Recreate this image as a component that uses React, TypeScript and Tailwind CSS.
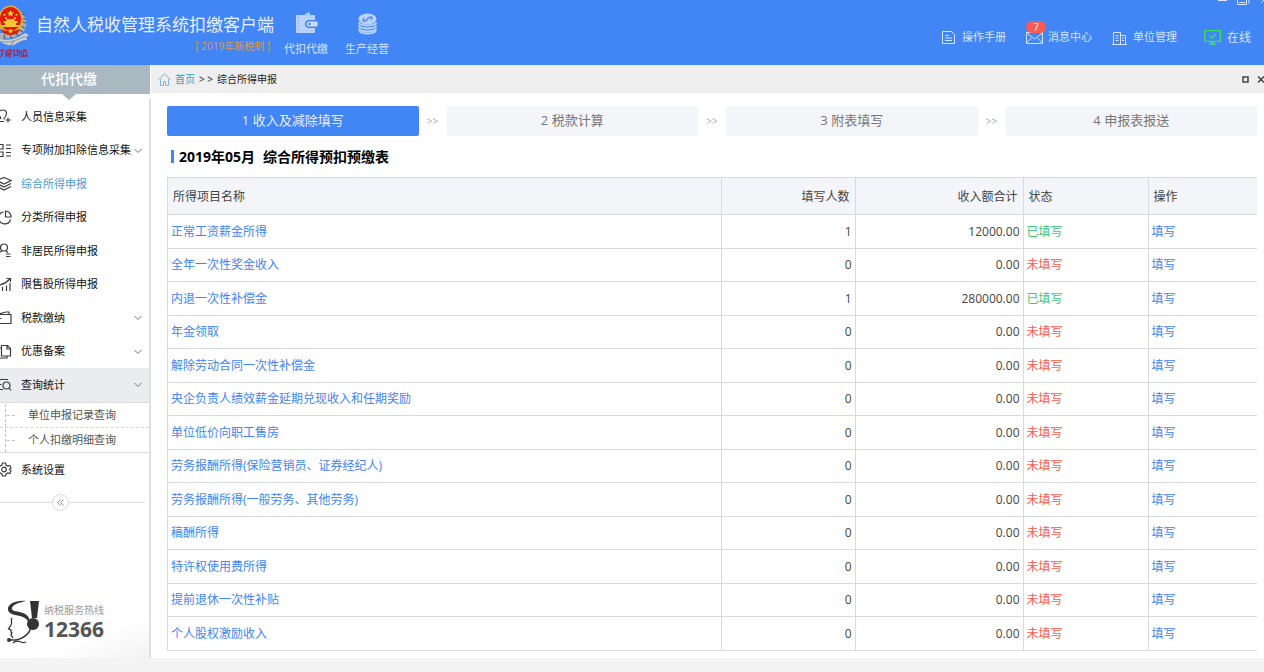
import { Fragment, type ReactNode } from 'react';

const FONT = "font-['Open_Sans','Noto_Sans_CJK_SC',sans-serif]";

type Item = { label: string; icon: ReactNode; arrow?: boolean; state?: 'active' | 'open' };

const topItems: Item[] = [
  {
    label: '人员信息采集',
    icon: (
      <>
        <path d="M8 9c1.500-1 2.500-3 2.500-5S9 1 6.500 1 3 2 3 4s1 4 2 5M5 9c0 1-4 1-4 3.500h7" />
        <path d="M8 9v1.500M12 8.500v5M9.500 11H15" />
      </>
    ),
  },
  {
    label: '专项附加扣除信息采集',
    arrow: true,
    icon: <path d="M1 1.500h6v4.500H1zM1 9h6v4.500H1zM10 2h5M10 5.500h5M10 9.500h5M10 13h5" />,
  },
  {
    label: '综合所得申报',
    state: 'active',
    icon: <path d="M8 1.500l7 3-7 3.500-7-3.500zM1 7.500l7 3.500 7-3.500M1 10.500L8 14l7-3.500" />,
  },
  {
    label: '分类所得申报',
    icon: (
      <>
        <path d="M7.500 2a6 6 0 1 0 7 7.500" />
        <path d="M9.500 1v6h5.500a5.500 5.500 0 0 0-5.500-6z" />
      </>
    ),
  },
  {
    label: '非居民所得申报',
    icon: (
      <>
        <circle cx="8" cy="4.500" r="3.500" />
        <path d="M6 8c-3 1-4 3-4 5.500M10 8l2 1.500M10 11h4.500M10 13.500h4.500" />
      </>
    ),
  },
  {
    label: '限售股所得申报',
    icon: <path d="M2.500 14v-3M6.500 14V10M10.500 14V8.500M14 14V6M1 8.500C6 8 10 6 14 2M10.500 1.500H14.500V5" />,
  },
  {
    label: '税款缴纳',
    arrow: true,
    icon: <path d="M1 4.500h14v9H1M1 4.500L10 2h3v2.500M1 8.500h4.500" />,
  },
  {
    label: '优惠备案',
    arrow: true,
    icon: <path d="M5.500 1.500h6l3 3v7.500h-9zM11 1.500v3.500h3.500M5.500 4H2.500v10H11v-2" />,
  },
  {
    label: '查询统计',
    arrow: true,
    state: 'open',
    icon: (
      <>
        <circle cx="10.500" cy="8.500" r="3.500" />
        <path d="M13 11l2 2.500M1 2.500h11M1 7.500h4.500M1 12.500h6" />
      </>
    ),
  },
];

const steps = ['1 收入及减除填写', '2 税款计算', '3 附表填写', '4 申报表报送'];

const rows = [
  { name: '正常工资薪金所得', count: 1, total: '12000.00' },
  { name: '全年一次性奖金收入', count: 0, total: '0.00' },
  { name: '内退一次性补偿金', count: 1, total: '280000.00' },
  { name: '年金领取', count: 0, total: '0.00' },
  { name: '解除劳动合同一次性补偿金', count: 0, total: '0.00' },
  { name: '央企负责人绩效薪金延期兑现收入和任期奖励', count: 0, total: '0.00' },
  { name: '单位低价向职工售房', count: 0, total: '0.00' },
  { name: '劳务报酬所得(保险营销员、证券经纪人)', count: 0, total: '0.00' },
  { name: '劳务报酬所得(一般劳务、其他劳务)', count: 0, total: '0.00' },
  { name: '稿酬所得', count: 0, total: '0.00' },
  { name: '特许权使用费所得', count: 0, total: '0.00' },
  { name: '提前退休一次性补贴', count: 0, total: '0.00' },
  { name: '个人股权激励收入', count: 0, total: '0.00' },
];

function Emblem() {
  return (
    <svg className="h-[60px] w-[29px] shrink-0" viewBox="0 0 29 60" fill="none">
      <path d="M18 11c6 3 9 8 8 15-1 6-6 10-15 12l-11 1v-6l8-1c8-2 13-11 10-21z" fill="#aab1b6" />
      <path d="M21 15l4-1M22 19l4 0M22 22l4 1M21 26l4 2M19 30l4 2M15 33l4 3M10 35l2 4M4 35l1 4" stroke="#4d5c73" strokeWidth="1.200" />
      <path d="M0 39c9 2 17 0 25-6l4 2-3 2 1 3c-5 0-9 2-13 5-4 1-10 0-14-4z" fill="#c9ced2" />
      <path d="M0 41.500c9 2 16-1 25-5" stroke="#8a949c" />
      <path d="M14 41l-3 4" stroke="#6f7a86" />
      <ellipse cx="10.500" cy="20" rx="12.500" ry="14.500" fill="#e3b034" />
      <ellipse cx="10.500" cy="19" rx="10.500" ry="12" fill="#e81710" />
      <path d="M10.500 10l1 2.500H14l-2 1.600.8 2.500-2.300-1.500-2.300 1.500.8-2.500-2-1.600h2.500z" fill="#ffe23c" />
      <path d="M3.500 14h2v1.500h-2zM15.500 14h2v1.500h-2zM5 17.500h2V19H5zM14 17.500h2V19h-2z" fill="#ffd83c" />
      <path d="M7 19h7l1 2h2l1 2h-2v2h3v2H2v-2h3v-2H3l1-2h2z" fill="#f6c733" />
      <path d="M1 29c6 3 13 3 19 0l-2 4c-5 2.500-10 2.500-15 0z" fill="#d3200f" />
      <circle cx="10.500" cy="31" r="2" fill="#f0bd2c" />
      <path
        d="M0 51l3-1-1 5-2 2M6 51l5-1-1 7-1-1M6 51v6M8 52v4M7 54h3M13 51l2-1M14 49v7l2-1M16 51l2-1-1 6M20 50l-1 6M21 51l1 5-2 1M23 51l4-1M24 49l-1 8M26 52l1 4-3 0"
        stroke="#a02a55"
        strokeWidth="1.300"
      />
    </svg>
  );
}

function Chevron() {
  return (
    <svg className="h-2 w-2 shrink-0" viewBox="0 0 8 8" fill="none" stroke="#777">
      <path d="M.5 2L4 5.500 7.500 2" />
    </svg>
  );
}

function NavRow({ label, icon, arrow, state }: Item) {
  return (
    <li className={`odd:h-[34px] even:h-[33px] ${state === 'open' ? 'bg-[#ebecef]' : ''}`}>
      <a
        href="#"
        className={`flex h-full items-center pr-[7px] text-[11px] ${state === 'active' ? 'text-[#4a9bd6]' : 'text-[#111]'}`}
      >
        <svg className="-ml-1 mr-[9px] h-4 w-4 shrink-0" viewBox="0 0 16 16" fill="none" stroke="#3c3c3c" strokeWidth="1.200">
          {icon}
        </svg>
        <span className="flex-1 whitespace-nowrap">{label}</span>
        {arrow && <Chevron />}
      </a>
    </li>
  );
}

function Header() {
  return (
    <header className="relative flex h-[65px] shrink-0 overflow-hidden bg-[#4285f5] text-[#d3e3fd]">
      <Emblem />
      <div className="ml-[7px] w-[238px] pt-[13px]">
        <h1 className="whitespace-nowrap text-[17px] leading-6 text-[#e6efff]">自然人税收管理系统扣缴客户端</h1>
        <p className="pr-1 text-right text-[10px] leading-[18px] text-[#d99a4b]">[ 2019年新税制 ]</p>
      </div>
      <nav className="ml-[10px] flex gap-[17px] pt-3 text-[11px] leading-4">
        <a href="#" className="flex flex-col items-center gap-[6px]">
          <svg className="h-[23px] w-[23px]" viewBox="0 0 23 23">
            <path d="M2 3h7l5-3 1 3h4a1 1 0 0 1 1 1v4h-6a4 4 0 0 0 0 8h6v4a1 1 0 0 1-1 1H2a1 1 0 0 1-1-1V4a1 1 0 0 1 1-1z" fill="#b9d2fb" />
            <path d="M14 9.500h8.500v5H14a2.500 2.500 0 0 1 0-5z" fill="#c9ddfc" />
            <circle cx="14.500" cy="12" r="1.200" fill="#4285f5" />
            <path d="M3.500 5v15M9 3h8" stroke="#6b9ff7" strokeDasharray="1 2" />
          </svg>
          代扣代缴
        </a>
        <a href="#" className="flex flex-col items-center gap-[6px]">
          <svg className="h-[23px] w-[23px]" viewBox="0 0 23 23" fill="none">
            <ellipse cx="11.500" cy="7" rx="9" ry="5.500" fill="#b9d2fb" />
            <path d="M7 8.500c3 1.500 4-.5 4.500-1.500S14 4 16 6M8 6l-1 2.500 2 1M15 8l1-2.500-2-1" stroke="#4285f5" strokeWidth="1.200" />
            <path
              d="M2.500 10.500c2 4 16 4 18 0M2.500 13.500c2 4 16 4 18 0M2.500 16.500c2 4 16 4 18 0M3 19c3 3.500 14 3.500 17 0"
              stroke="#b9d2fb"
              strokeWidth="1.800"
            />
          </svg>
          生产经营
        </a>
      </nav>
      <nav className="ml-auto flex items-center gap-5 pr-[13px] pt-[10px] text-[11px]">
        <a href="#" className="flex items-center gap-[7px]">
          <svg className="h-[13px] w-[13px]" viewBox="0 0 13 13" fill="none" stroke="currentColor">
            <path d="M.5.5h9l3 3v9H.5zM3 4.500h4M3 7h7M3 9.500h7" />
          </svg>
          操作手册
        </a>
        <a href="#" className="relative flex items-center gap-[5px]">
          <svg className="h-[13px] w-[17px]" viewBox="0 0 17 13" fill="none" stroke="currentColor">
            <path d="M.5 1.500h16v11H.5zM.5 2l8 6 8-6M.5 12l5-5M16.500 12l-5-5" />
          </svg>
          <span className="absolute -top-2 left-0 h-3 w-5 rounded-full bg-[#fb5a52] text-center text-[10px] leading-3 text-white">7</span>
          消息中心
        </a>
        <a href="#" className="flex items-center gap-[6px]">
          <svg className="h-[14px] w-[15px]" viewBox="0 0 15 14" fill="none" stroke="currentColor">
            <path d="M1.500 13V1.500h7V13M8.500 4.500h5V13M0 13.500h15M3.500 4.500h3M3.500 7h3M3.500 9.500h3M10 7h2M10 9.500h2" />
          </svg>
          单位管理
        </a>
        <a href="#" className="ml-[7px] flex items-center gap-[6px] text-[12px]">
          <svg className="h-[15px] w-[17px]" viewBox="0 0 17 15" fill="none" stroke="#38e05c" strokeWidth="1.300">
            <path d="M.7.7h15.600v10.600H.7zM5.500 5.500l2.500 2.500 4-4M5 14h7M7 12.500h3" />
          </svg>
          在线
        </a>
      </nav>
      <svg className="absolute right-0 top-0 h-[6px] w-[48px]" viewBox="0 0 48 6" fill="none" stroke="#dbe8ff">
        <path d="M2 .5h9M21.500 0v4.500h9V0M23 2.500h6M33 3.500V0M45 3l3-3" />
      </svg>
    </header>
  );
}

function Sidebar() {
  return (
    <aside className="flex w-[151px] shrink-0 flex-col">
      <div className="relative h-[29px] w-[150px] bg-[#a9b8c1] pr-3 text-center text-[14px] font-medium leading-7 text-white">
        代扣代缴
        <svg className="absolute left-[62px] top-full h-[6px] w-[14px]" viewBox="0 0 14 6">
          <path d="M0 0h14L7 6z" fill="#a9b8c1" />
        </svg>
      </div>
      <nav className="mt-[5px] flex flex-1 flex-col border-r-2 border-[#dfdfdf]">
        <ul className="pt-px">
          {topItems.map((item) => (
            <NavRow key={item.label} {...item} />
          ))}
        </ul>
        <div className="relative border-y border-[#dcdcdc] text-[11px] text-[#555]">
          <ul>
            <li className="h-[25px] border-b border-dashed border-[#d4d8dc] pl-7 leading-6">
              <a href="#">单位申报记录查询</a>
            </li>
            <li className="h-6 pl-7 leading-6">
              <a href="#">个人扣缴明细查询</a>
            </li>
          </ul>
          <svg className="absolute left-[5px] top-0 h-[49px] w-[10px]" viewBox="0 0 10 49" fill="none" stroke="#b5cbdc" strokeDasharray="3 2">
            <path d="M.5 1v48M2 12.500h8M2 37.500h8" />
          </svg>
        </div>
        <ul>
          <NavRow
            label="系统设置"
            icon={
              <>
                <path d="M6.500 1h3l.6 2 1.700 1 2-.6L15 6l-1.500 1.500L15 9l-1.200 2.600-2-.6-1.700 1-.6 2h-3l-.6-2-1.700-1-2 .6L1 9l1.500-1.500L1 6l1.200-2.600 2 .6 1.700-1z" />
                <circle cx="8" cy="7.500" r="2.300" />
              </>
            }
          />
        </ul>
        <div className="mr-1 mt-[7px] flex items-center">
          <span className="h-px w-[52px] bg-[#dedede]" />
          <button aria-label="收起" className="flex h-[17px] w-[17px] items-center justify-center rounded-full border border-[#d5d5de]">
            <svg className="h-[7px] w-[7px]" viewBox="0 0 7 7" fill="none" stroke="#7f8fb5">
              <path d="M3.500.5l-3 3 3 3M6.500.5l-3 3 3 3" />
            </svg>
          </button>
          <span className="h-px flex-1 bg-[#dedede]" />
        </div>
        <div className="mt-auto flex items-start gap-[5px] bg-linear-to-br from-white from-60% to-[#f3f3f3] pb-[14px] pl-[7px]">
          <svg className="h-[44px] w-8" viewBox="0 0 32 44" fill="none">
            <path
              d="M19 1C9 0 0 4 1 10c1 5 10 5 15 7 4 2 5 4 7 7 0-6-2-9-7-11C12 11 4 12 5 8c1-4 8-5.500 14-7z"
              fill="#333"
            />
            <path d="M23 1h9l-2 17h-5z" fill="#333" />
            <circle cx="26" cy="24" r="6" fill="#333" />
            <path d="M5 18c-2 2 1 4-1 7l-2.500 4 2.500 1v2l1 1-1 2 2 3" stroke="#333" strokeWidth="1.300" />
            <path d="M2 40h7c7-1 13-6 15-12" stroke="#333" strokeWidth="1.500" />
            <path d="M6 43c3-3 6-2 8-1s3 1 5 0" stroke="#333" strokeWidth="1.300" />
            <circle cx="2" cy="40" r="2" fill="#333" />
          </svg>
          <div>
            <p className="mt-[2px] text-[10px] leading-4 text-[#999]">纳税服务热线</p>
            <p className="text-[21px] font-bold leading-[22px] text-[#555]">12366</p>
          </div>
        </div>
      </nav>
    </aside>
  );
}

function DeclarationTable() {
  return (
    <table className="w-full table-fixed border-collapse text-[12px] leading-4 text-[#444] [&_td]:border [&_td]:border-r-0 [&_td]:border-[#d9dade] [&_td]:px-[3px] [&_th]:border [&_th]:border-r-0 [&_th]:border-[#d9dade] [&_th]:px-[5px] [&_th]:pt-[2px] [&_th]:font-normal">
      <colgroup>
        <col />
        <col className="w-[134px]" />
        <col className="w-[168px]" />
        <col className="w-[125px]" />
        <col className="w-[109px]" />
      </colgroup>
      <thead>
        <tr className="h-[37px] bg-[#f4f5f9] text-left">
          <th>所得项目名称</th>
          <th className="text-right">填写人数</th>
          <th className="text-right">收入额合计</th>
          <th>状态</th>
          <th>操作</th>
        </tr>
      </thead>
      <tbody>
        {rows.map((row) => (
          <tr key={row.name} className="odd:h-[34px] even:h-[33px]">
            <td>
              <a href="#" className="text-[#4285f5]">{row.name}</a>
            </td>
            <td className="text-right">{row.count}</td>
            <td className="text-right">{row.total}</td>
            <td className={row.count ? 'text-[#3cc47c]' : 'text-[#fb5a48]'}>{row.count ? '已填写' : '未填写'}</td>
            <td>
              <a href="#" className="text-[#4285f5]">填写</a>
            </td>
          </tr>
        ))}
      </tbody>
    </table>
  );
}

export default function App() {
  return (
    <div className={`flex min-h-screen flex-col overflow-hidden bg-white ${FONT}`}>
      <Header />
      <div className="flex flex-1">
        <Sidebar />
        <main className="min-w-0 flex-1">
          <div className="flex h-7 items-center bg-[#efefef] pl-[7px] text-[10px] text-[#222]">
            <svg className="mr-1 h-[13px] w-[13px]" viewBox="0 0 13 13" fill="none" stroke="#7db8dc">
              <path d="M.5 6.500l6-5.500 6 5.500M2.500 6v6.500h3v-4h2v4h3V6" />
            </svg>
            <a href="#" className="text-[#2a9fd0]">首页</a>
            <span className="mx-1">&gt; &gt;</span>
            <span>综合所得申报</span>
            <div className="-mr-1 ml-auto flex items-center gap-2">
              <button aria-label="最大化">
                <svg className="h-[7px] w-[7px]" viewBox="0 0 7 7" fill="none" stroke="#444" strokeWidth="1.500">
                  <path d="M1 1h5v5H1z" />
                </svg>
              </button>
              <button aria-label="关闭">
                <svg className="h-[7px] w-[11px]" viewBox="0 0 11 7" fill="none" stroke="#444" strokeWidth="1.500">
                  <path d="M1 .5l6 6M7 .5l-6 6" />
                </svg>
              </button>
            </div>
          </div>
          <div className="pl-4 pr-[7px] pt-[13px]">
            <div className="flex h-[30px] items-stretch">
              {steps.map((step, i) => (
                <Fragment key={step}>
                  {i > 0 && (
                    <span className="flex w-7 items-center justify-center text-[10px] text-[#aaa]">&gt;&gt;</span>
                  )}
                  <button
                    className={`flex-1 rounded-[2px] text-[13px] ${i === 0 ? 'bg-[#4285f5] text-[#e6efff]' : 'bg-[#f4f5f9] text-[#777]'}`}
                  >
                    {step}
                  </button>
                </Fragment>
              ))}
            </div>
            <h2 className="my-[10px] flex h-[21px] items-center pl-1 text-[14px] font-bold text-black">
              <span className="mr-[5px] h-[13px] w-[3px] bg-[#4285f5]" />
              <span className="mr-2">2019年05月</span>
              <span>综合所得预扣预缴表</span>
            </h2>
            <DeclarationTable />
          </div>
        </main>
      </div>
      <footer className="h-[14px] shrink-0 bg-[#f4f4f4]" />
    </div>
  );
}
